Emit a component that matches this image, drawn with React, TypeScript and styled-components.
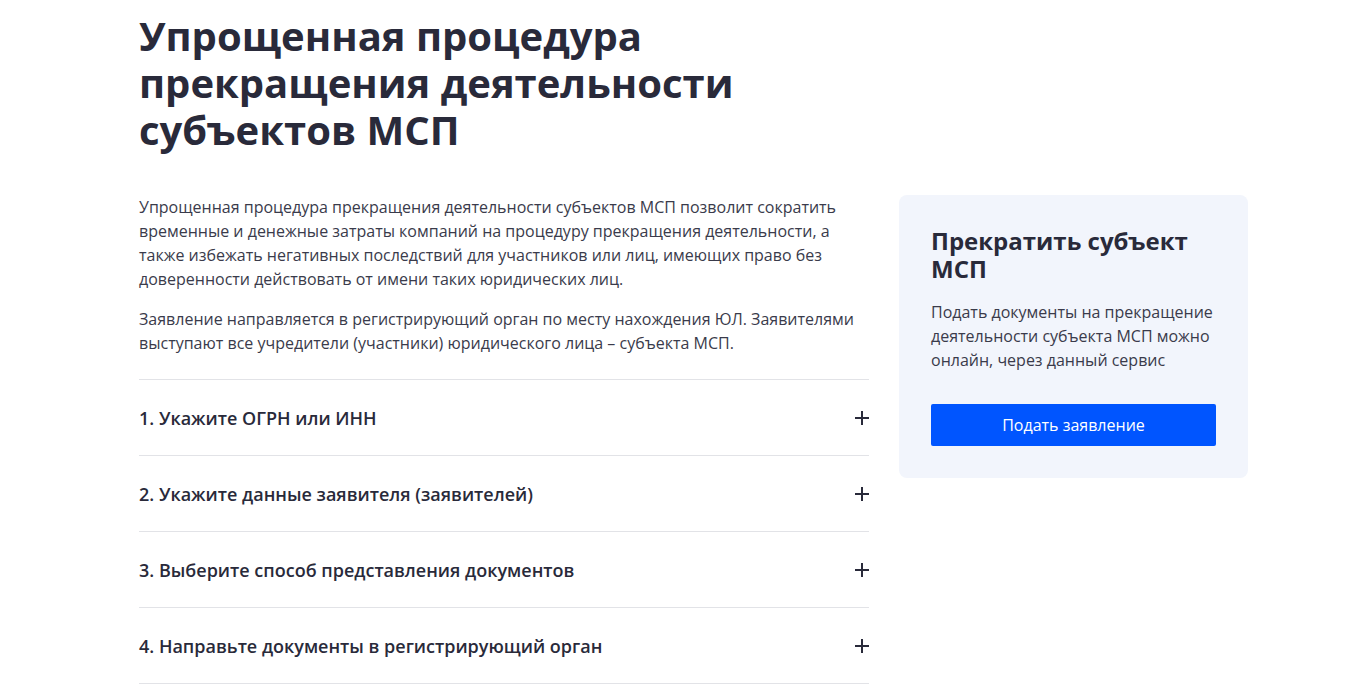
import React from "react"
import styled, { createGlobalStyle } from "styled-components"

const GlobalStyle = createGlobalStyle`
  html, body {
    margin: 0;
    padding: 0;
    background: #fff;
  }
  body {
    font-family: "Open Sans", "Noto Sans", sans-serif;
    color: #292a3a;
  }
`

const Page = styled.div`
  padding: 12px 0 0 139px;
  width: 1110px;
`

const Title = styled.h1`
  margin: 0 0 42px;
  width: 640px;
  font-size: 40px;
  line-height: 47px;
  font-weight: 700;
  color: #292a3a;
`

const Columns = styled.div`
  display: grid;
  grid-template-columns: 730px 349px;
  column-gap: 30px;
  align-items: start;
`

const Main = styled.div``

const Text = styled.p`
  margin: 0 0 16px;
  font-size: 16px;
  line-height: 24px;
  color: #3a3b4b;
`

const Steps = styled.ul`
  list-style: none;
  margin: 24px 0 0;
  padding: 0;
  border-top: 1px solid #e2e3e7;
`

const Step = styled.li`
  display: flex;
  align-items: center;
  justify-content: space-between;
  height: 75px;
  border-bottom: 1px solid #e2e3e7;
  font-size: 18px;
  font-weight: 600;
  color: #292a3a;
  cursor: pointer;
`

const Card = styled.aside`
  padding: 32px;
  background: #f2f5fc;
  border-radius: 8px;
`

const CardTitle = styled.h2`
  margin: 0 0 17px;
  font-size: 24px;
  line-height: 28px;
  font-weight: 700;
  color: #292a3a;
`

const CardText = styled.p`
  margin: 0 0 32px;
  font-size: 16px;
  line-height: 24px;
  color: #3a3b4b;
`

const Button = styled.button`
  display: block;
  width: 100%;
  height: 42px;
  border: 0;
  border-radius: 2px;
  background: #0055ff;
  color: #fff;
  font-family: inherit;
  font-size: 16px;
  cursor: pointer;
`

const Plus = () => (
  <svg width="14" height="14" viewBox="0 0 14 14" aria-hidden>
    <path d="M7 0v14M0 7h14" stroke="#292a3a" strokeWidth="2" fill="none" />
  </svg>
)

const steps = [
  "1. Укажите ОГРН или ИНН",
  "2. Укажите данные заявителя (заявителей)",
  "3. Выберите способ представления документов",
  "4. Направьте документы в регистрирующий орган",
]

const App = () => (
  <>
    <GlobalStyle />
    <Page>
      <Title>Упрощенная процедура прекращения деятельности субъектов МСП</Title>
      <Columns>
        <Main>
          <Text>
            Упрощенная процедура прекращения деятельности субъектов МСП позволит сократить
            временные и денежные затраты компаний на процедуру прекращения деятельности, а
            также избежать негативных последствий для участников или лиц, имеющих право без
            доверенности действовать от имени таких юридических лиц.
          </Text>
          <Text>
            Заявление направляется в регистрирующий орган по месту нахождения ЮЛ. Заявителями
            выступают все учредители (участники) юридического лица – субъекта МСП.
          </Text>
          <Steps>
            {steps.map((s) => (
              <Step key={s}>
                {s}
                <Plus />
              </Step>
            ))}
          </Steps>
        </Main>
        <Card>
          <CardTitle>Прекратить субъект МСП</CardTitle>
          <CardText>
            Подать документы на прекращение деятельности субъекта МСП можно онлайн, через
            данный сервис
          </CardText>
          <Button>Подать заявление</Button>
        </Card>
      </Columns>
    </Page>
  </>
)

export default App
